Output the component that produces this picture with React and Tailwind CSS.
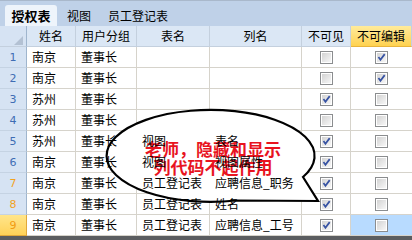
import React from "react";

const rows = [
    { city: "南京", role: "董事长", table: "", col: "", hidden: false, locked: true },
    { city: "南京", role: "董事长", table: "", col: "", hidden: false, locked: true },
    { city: "苏州", role: "董事长", table: "", col: "", hidden: true, locked: false },
    { city: "苏州", role: "董事长", table: "", col: "", hidden: false, locked: false },
    { city: "苏州", role: "董事长", table: "视图", col: "表名", hidden: true, locked: false },
    { city: "南京", role: "董事长", table: "视图", col: "视图属性", hidden: true, locked: false },
    { city: "南京", role: "董事长", table: "员工登记表", col: "应聘信息_职务", hidden: true, locked: false },
    { city: "南京", role: "董事长", table: "员工登记表", col: "姓名", hidden: true, locked: false },
    { city: "南京", role: "董事长", table: "员工登记表", col: "应聘信息_工号", hidden: true, locked: false },
];

function CheckBox({ checked }) {
    return (
        <span className="relative z-20 flex h-[13px] w-[13px] items-center justify-center border border-[#8b8d8f] bg-white p-[1px]">
            <span className="relative block h-full w-full bg-gradient-to-br from-[#d3d3d3] to-[#f7f7f7]">
                {checked ? (
                    <svg viewBox="0 0 11 11" className="absolute inset-0 h-full w-full">
                        <path d="M1.8 5 L4.2 8.2 L9.4 1.4" fill="none" stroke="#3753a3" strokeWidth="2.1" />
                    </svg>
                ) : null}
            </span>
        </span>
    );
}

function Cell({ children, className = "" }) {
    return (
        <div className={`flex h-[21px] items-center border-b border-r border-[#d6d3cb] bg-white pl-[5px] ${className}`}>
            <span className="relative z-20 whitespace-nowrap">{children}</span>
        </div>
    );
}

function HeadCell({ children, className = "" }) {
    return (
        <div className={`flex h-[21px] items-center justify-center border-b border-r border-[#c4d0de] ${className}`}>
            {children}
        </div>
    );
}

export default function App() {
    return (
        <div
            className="relative h-[240px] w-[412px] overflow-hidden bg-white text-[12px] text-black"
            style={{ fontFamily: '"Noto Sans CJK SC", "Noto Sans", sans-serif' }}
        >
            {/* tab strip */}
            <div className="flex h-[26px] items-end border-t border-[#a9b8cb] bg-[#bfd1e8] pl-[5px]">
                <div className="flex h-[21px] w-[52px] items-center justify-center rounded-t-[3px] bg-[#eef4fb] text-[13px] font-bold">
                    授权表
                </div>
                <div className="flex h-[21px] items-center pl-[10px]">视图</div>
                <div className="flex h-[21px] items-center pl-[17px]">员工登记表</div>
            </div>

            {/* grid */}
            <div className="grid grid-cols-[27px_49px_61px_73px_92px_49px_61px] leading-none">
                <HeadCell className="relative justify-end border-r-[#9fb5cd] bg-[#d6e3f3]">
                    <span className="mr-[3px] mt-[9px] h-0 w-0 border-b-[9px] border-l-[9px] border-b-[#b3c1d3] border-l-transparent" />
                </HeadCell>
                <HeadCell className="bg-[#dbe7f5]">姓名</HeadCell>
                <HeadCell className="bg-[#dbe7f5]">用户分组</HeadCell>
                <HeadCell className="bg-[#dbe7f5]">表名</HeadCell>
                <HeadCell className="bg-[#dbe7f5]">列名</HeadCell>
                <HeadCell className="bg-[#dbe7f5]">不可见</HeadCell>
                <HeadCell className="border-b-[#e9b43c] bg-gradient-to-b from-[#ffeb9a] to-[#ffd24e]">不可编辑</HeadCell>

                {rows.map((r, i) => {
                    const n = i + 1;
                    const sel = n >= 7;
                    const last = n === 9;
                    return (
                        <React.Fragment key={n}>
                            <div
                                className={`flex h-[21px] items-center justify-center border-b border-r text-[11px] ${
                                    last
                                        ? "border-[#e0a83a] bg-gradient-to-b from-[#ffe58a] to-[#ffd257] text-[#f29b11]"
                                        : sel
                                        ? "border-b-[#c5d3e3] border-r-[#9fb5cd] bg-[#d6e3f3] text-[#f2a21f]"
                                        : "border-b-[#c5d3e3] border-r-[#9fb5cd] bg-[#d6e3f3] text-[#3e6db4]"
                                }`}
                                style={{ fontFamily: '"DejaVu Sans", sans-serif' }}
                            >
                                {n}
                            </div>
                            <Cell>{r.city}</Cell>
                            <Cell className="pl-[4px]">{r.role}</Cell>
                            <Cell>{r.table}</Cell>
                            <Cell>{r.col}</Cell>
                            <div className="flex h-[21px] items-center justify-center border-b border-r border-[#d6d3cb] bg-white">
                                <CheckBox checked={r.hidden} />
                            </div>
                            <div
                                className={`flex h-[21px] items-center justify-center border-b border-[#d6d3cb] ${
                                    last ? "bg-[#b8dbff]" : "bg-white"
                                }`}
                            >
                                <CheckBox checked={r.locked} />
                            </div>
                        </React.Fragment>
                    );
                })}
            </div>

            <div className="h-[4px] bg-[#5b5d60]" />

            {/* speech bubble overlay */}
            <svg className="absolute left-0 top-0 z-10" width="412" height="240" viewBox="0 0 412 240">
                <path
                    d="M303 177 L318 201 L236 200.5 A104 46 0 1 1 303 177 Z"
                    fill="#ffffff"
                    stroke="#000000"
                    strokeWidth="2.2"
                    strokeLinejoin="miter"
                />
            </svg>
            <div className="absolute left-[108px] top-[140px] z-10 w-[210px] text-center text-[17px] font-bold leading-[18px] text-[#e8141f]">
                <div>老师，隐藏和显示</div>
                <div>列代码不起作用</div>
            </div>
        </div>
    );
}
